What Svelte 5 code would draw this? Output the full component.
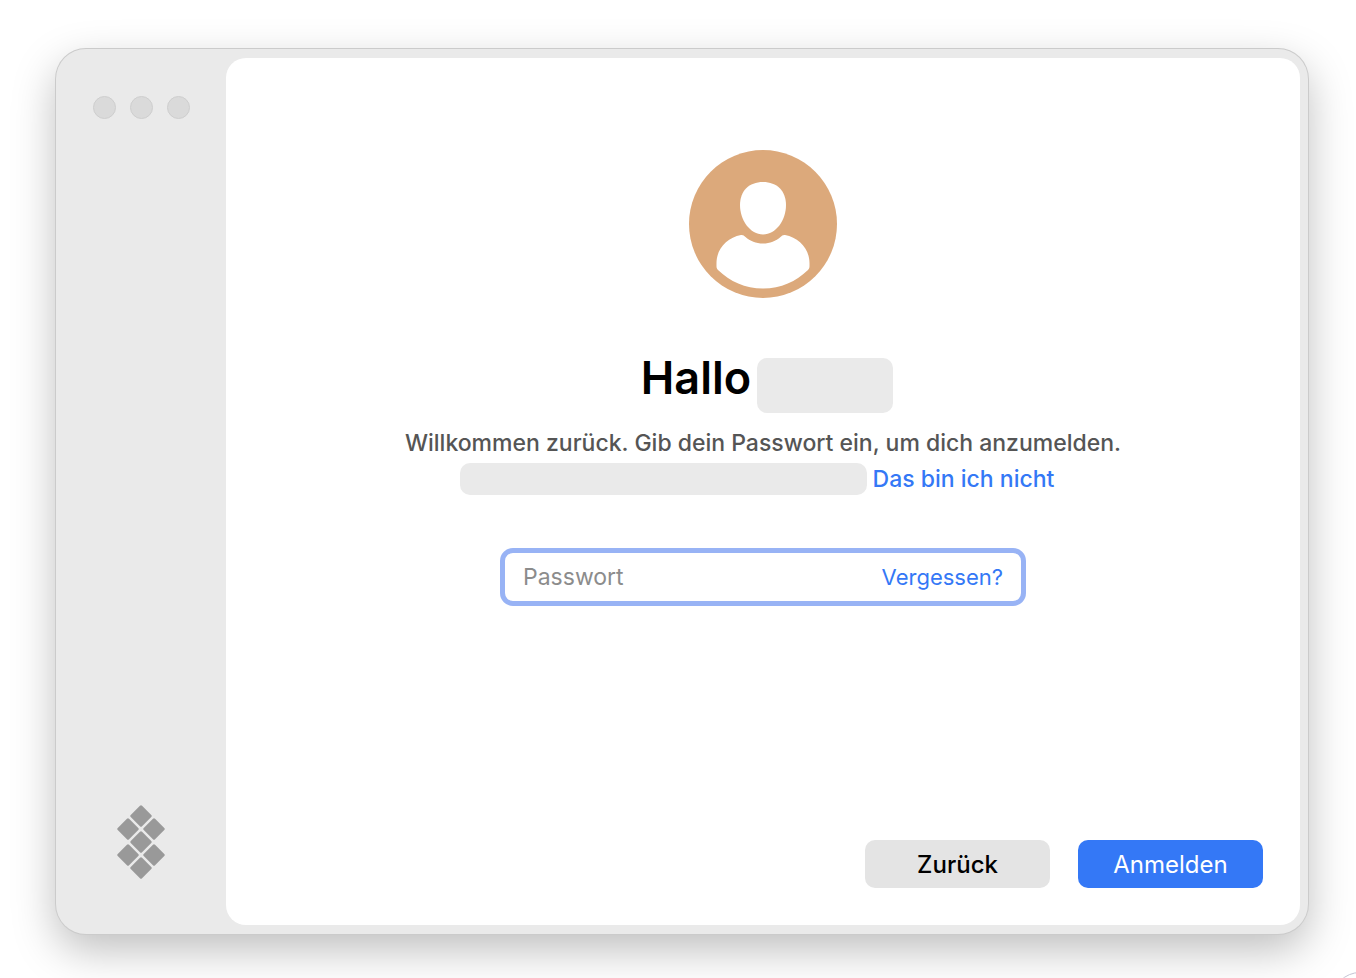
<script lang="ts">
	let password = '';

	const lights = ['Schließen', 'Minimieren', 'Zoomen'];
	const tiles = [
		[24, 11],
		[11, 24],
		[37, 24],
		[24, 37],
		[11, 50],
		[37, 50],
		[24, 63]
	];
</script>

<div class="desktop">
	<div class="window">
		<aside>
			<div class="lights">
				{#each lights as label}
					<button type="button" class="light" aria-label={label}></button>
				{/each}
			</div>
			<svg class="logo" viewBox="0 0 48 74" aria-hidden="true">
				{#each tiles as [x, y]}
					<rect
						x={x - 8}
						y={y - 8}
						width="16"
						height="16"
						rx="1.5"
						transform="rotate(45 {x} {y})"
					/>
				{/each}
			</svg>
		</aside>

		<main>
			<svg class="avatar" viewBox="0 0 148 148" aria-hidden="true">
				<circle cx="74" cy="74" r="74" fill="#dca97b" />
				<path
					d="M74 32C88 32 97 41 97 55C97 70 87 84.500 74 84.500S51 70 51 55C51 41 60 32 74 32Z"
				/>
				<path
					d="M52 85C54 84.700 55 85.500 56.500 87C61 91 67 93.500 74 93.500S87 91 91.500 87C93 85.500 94 84.700 96 85C110 87.500 120.500 99 120.500 113C120.500 117 120.800 118.500 119 120C107 131.500 92 138.500 74 138.500S41 131.500 29 120C27.200 118.500 27.500 117 27.500 113C27.500 99 38 87.500 52 85Z"
				/>
			</svg>

			<form on:submit|preventDefault>
				<h1>Hallo <span class="hidden name"></span></h1>
				<p>Willkommen zurück. Gib dein Passwort ein, um dich anzumelden.</p>
				<div class="account">
					<span class="hidden mail"></span>
					<a href="#account">Das bin ich nicht</a>
				</div>

				<div class="field">
					<input
						type="password"
						placeholder="Passwort"
						aria-label="Passwort"
						bind:value={password}
					/>
					<a href="#forgot">Vergessen?</a>
				</div>

				<div class="actions">
					<button type="button" class="action">Zurück</button>
					<button type="submit" class="action primary">Anmelden</button>
				</div>
			</form>
		</main>
	</div>
	<span class="corner"></span>
</div>

<style>
	:global(body) {
		background: #fff;
		font-family: Inter, 'Liberation Sans', sans-serif;
	}

	.desktop {
		position: relative;
		box-sizing: border-box;
		min-height: 100vh;
		padding: 49px 48px 44px 56px;
		display: flex;
		overflow: hidden;
	}

	.window {
		flex: 1;
		display: flex;
		padding: 9px 8px 9px 0;
		border-radius: 30px;
		background: #eaeaea;
		box-shadow:
			0 0 0 1px #cbcbcb,
			0 16px 44px rgba(0, 0, 0, 0.26);
	}

	aside {
		width: 170px;
		display: flex;
		flex-direction: column;
		justify-content: space-between;
		align-items: center;
		padding: 38px 0 46px;
		box-sizing: border-box;
	}

	.lights {
		display: flex;
		gap: 14px;
	}

	.light {
		width: 23px;
		height: 23px;
		padding: 0;
		border: 1px solid #cecece;
		border-radius: 50%;
		background: #dadada;
	}

	.logo {
		width: 48px;
		height: 74px;
		fill: #999;
	}

	main {
		flex: 1;
		display: flex;
		flex-direction: column;
		align-items: center;
		box-sizing: border-box;
		padding: 92px 37px 37px;
		border-radius: 20px;
		background: #fff;
	}

	.avatar {
		width: 148px;
		height: 148px;
		fill: #fff;
	}

	form {
		flex: 1;
		align-self: stretch;
		display: flex;
		flex-direction: column;
		align-items: center;
	}

	h1 {
		display: flex;
		gap: 6px;
		margin: 60px 0 0;
		padding-left: 8px;
		font-size: 45px;
		font-weight: 600;
		line-height: 40px;
		color: #000;
	}

	.hidden {
		background: #eaeaea;
		border-radius: 10px;
	}

	.name {
		width: 136px;
		height: 55px;
	}

	p {
		margin: 12px 0 0;
		font-size: 23px;
		font-weight: 500;
		line-height: 36px;
		color: #555;
	}

	a {
		color: #3478f6;
		text-decoration: none;
	}

	.account {
		display: flex;
		align-items: center;
		gap: 6px;
		padding-right: 12px;
		font-size: 23px;
		font-weight: 500;
		line-height: 36px;
	}

	.mail {
		width: 407px;
		height: 32px;
	}

	.field {
		display: flex;
		align-items: center;
		box-sizing: border-box;
		width: 526px;
		max-width: 100%;
		height: 58px;
		margin-top: 51px;
		padding: 0 18px;
		border: 5px solid #98b3f5;
		border-radius: 13px;
		font-size: 22px;
	}

	input {
		flex: 1;
		min-width: 0;
		padding: 0;
		border: 0;
		outline: 0;
		font: inherit;
		font-size: 23px;
		background: none;
	}

	input::placeholder {
		color: #8c8c8c;
	}

	.actions {
		align-self: stretch;
		display: flex;
		justify-content: flex-end;
		gap: 28px;
		margin-top: auto;
	}

	.action {
		width: 185px;
		height: 48px;
		padding: 0;
		border: 0;
		border-radius: 10px;
		font: inherit;
		font-size: 24px;
		font-weight: 500;
		color: #000;
		background: #e4e4e4;
	}

	.primary {
		font-weight: 400;
		color: #fff;
		background: #3478f6;
	}

	.corner {
		position: absolute;
		right: -32px;
		bottom: -50px;
		width: 54px;
		height: 54px;
		border: 1px solid #c4c4d4;
		border-radius: 50%;
	}
</style>
